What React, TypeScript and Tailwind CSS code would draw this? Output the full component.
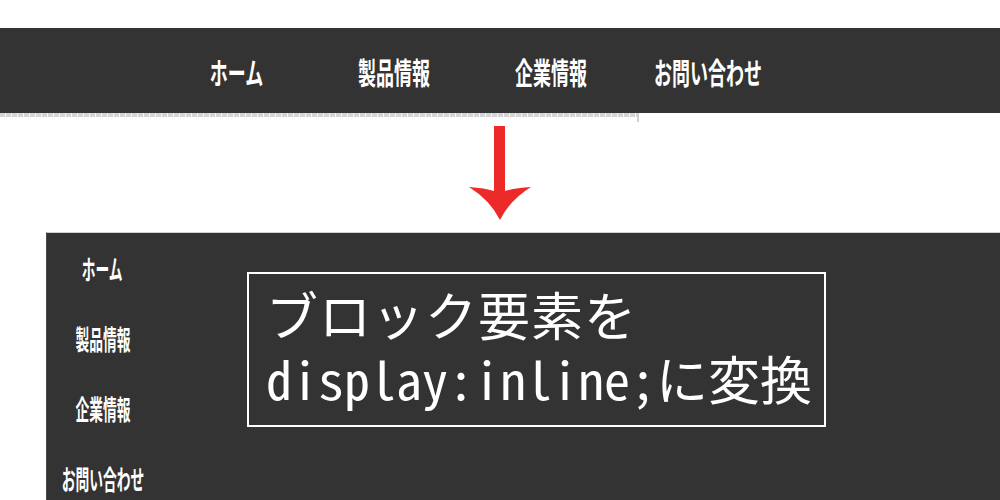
const menu = ["ホーム", "製品情報", "企業情報", "お問い合わせ"];

const jp = "font-['Noto_Sans_CJK_JP','Noto_Sans',sans-serif]";

function Arrow() {
    return (
        <svg width="62" height="94" viewBox="0 0 62 94" className="block">
            <path d="M25 0 H36 V65 Q46 62 62 61 Q41 74 31 94 Q21 74 0 61 Q16 62 25 65 Z" fill="#ed2a2a"/>
        </svg>
    );
}

export default function App() {
    return (
        <div className={`w-[1000px] h-[500px] overflow-hidden bg-white ${jp}`}>
            <div className="h-[28px]"/>
            <nav className="h-[85px] bg-[#333333] flex items-center pl-[158px]">
                {menu.map(m => (
                    <div key={m} className="w-[157px] flex justify-center">
                        <span className="inline-block whitespace-nowrap text-[30px] leading-none font-bold text-white scale-x-[0.6]">{m}</span>
                    </div>
                ))}
            </nav>
            <div className="flex h-[9px]">
                <div className="w-[637px] h-[4px] bg-[repeating-linear-gradient(90deg,#d4d4d4_0px,#d4d4d4_5px,#f4f4f4_5px,#f4f4f4_6px)]"/>
                <div className="w-[2px] h-[9px] bg-[#cfcfcf]"/>
            </div>
            <div className="h-[110px] pt-[4px] flex justify-center">
                <Arrow/>
            </div>
            <section className="ml-[46px] h-[300px] bg-[#333333] border-t border-t-[#d0d0d0] border-l border-l-[#4a4a4a] flex">
                <ul className="w-[111px] shrink-0 flex flex-col">
                    {menu.map(m => (
                        <li key={m} className="h-[70px] flex items-center justify-center">
                            <span className="inline-block whitespace-nowrap text-[27px] leading-none font-bold text-white scale-x-[0.51]">{m}</span>
                        </li>
                    ))}
                </ul>
                <div className="ml-[89px] mt-[39px] w-[579px] h-[155px] shrink-0 border-2 border-white pl-[17px] pt-[8px] text-white text-[52px] leading-[64px] font-light whitespace-nowrap font-['Noto_Sans_Mono_CJK_JP','Noto_Sans_CJK_JP',monospace]">
                    <div className="tracking-[1px]">ブロック要素を</div>
                    <div>display:inline;に変換</div>
                </div>
            </section>
        </div>
    );
}
